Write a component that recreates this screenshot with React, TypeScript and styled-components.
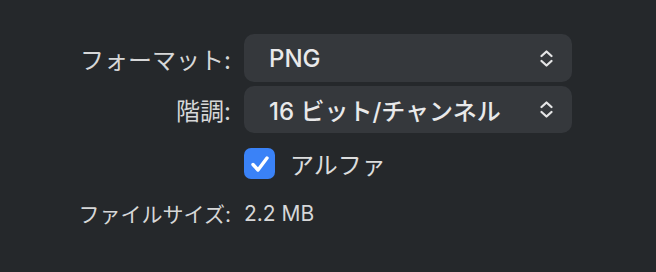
import React from 'react';
import styled, { createGlobalStyle } from 'styled-components';

const GlobalStyle = createGlobalStyle`
  html, body {
    margin: 0;
    padding: 0;
    background: #25282b;
  }
  body {
    font-family: Inter, "Noto Sans CJK JP", sans-serif;
    -webkit-font-smoothing: antialiased;
  }
`;

const Panel = styled.div`
  width: 656px;
  height: 272px;
  box-sizing: border-box;
  padding-top: 34px;
  background: #25282b;
`;

const Grid = styled.div`
  display: grid;
  grid-template-columns: 231px 328px;
  column-gap: 13px;
  row-gap: 4px;
  align-items: center;
`;

const Label = styled.div<{ $small?: boolean }>`
  text-align: right;
  color: #d6d7d8;
  font-size: ${(p) => (p.$small ? '21px' : '24px')};
  white-space: nowrap;
`;

const Popup = styled.div<{ $h: number }>`
  height: ${(p) => p.$h}px;
  border-radius: 10px;
  background: #35383c;
  display: flex;
  align-items: center;
  justify-content: space-between;
  padding: 0 18px 0 25px;
  box-sizing: border-box;
  color: #e9e9ea;
  font-size: 24px;
  font-weight: 500;
`;

const CheckRow = styled.div`
  grid-column: 2;
  display: flex;
  align-items: center;
  gap: 15px;
  margin-top: 9px;
  color: #dcdddd;
  font-size: 24px;
`;

const Box = styled.div`
  width: 31px;
  height: 31px;
  border-radius: 7px;
  background: #3a82f7;
  display: flex;
  align-items: center;
  justify-content: center;
`;

const Value = styled.div`
  color: #d6d7d8;
  font-size: 21px;
`;

const Spacer = styled.div`
  grid-column: 1 / span 2;
  height: 9px;
`;

const Chevrons = () => (
  <svg width="15" height="19" viewBox="0 0 15 19" fill="none">
    <path d="M2.5 7 L7.5 2.5 L12.5 7" stroke="#e4e4e5" strokeWidth="2.3" strokeLinecap="round" strokeLinejoin="round" />
    <path d="M2.5 12 L7.5 16.5 L12.5 12" stroke="#e4e4e5" strokeWidth="2.3" strokeLinecap="round" strokeLinejoin="round" />
  </svg>
);

const Check = () => (
  <svg width="20" height="18" viewBox="0 0 20 18" fill="none">
    <path d="M3 9.5 L8 15 L17 3" stroke="#ffffff" strokeWidth="3.4" strokeLinecap="round" strokeLinejoin="round" />
  </svg>
);

const App: React.FC = () => {
  return (
    <Panel>
      <GlobalStyle />
      <Grid>
        <Label>フォーマット:</Label>
        <Popup $h={48}>
          <span>PNG</span>
          <Chevrons />
        </Popup>
        <Label>階調:</Label>
        <Popup $h={47}>
          <span>16 ビット/チャンネル</span>
          <Chevrons />
        </Popup>
        <CheckRow>
          <Box>
            <Check />
          </Box>
          <span>アルファ</span>
        </CheckRow>
        <Spacer />
        <Label $small>ファイルサイズ:</Label>
        <Value>2.2 MB</Value>
      </Grid>
    </Panel>
  );
};

export default App;
